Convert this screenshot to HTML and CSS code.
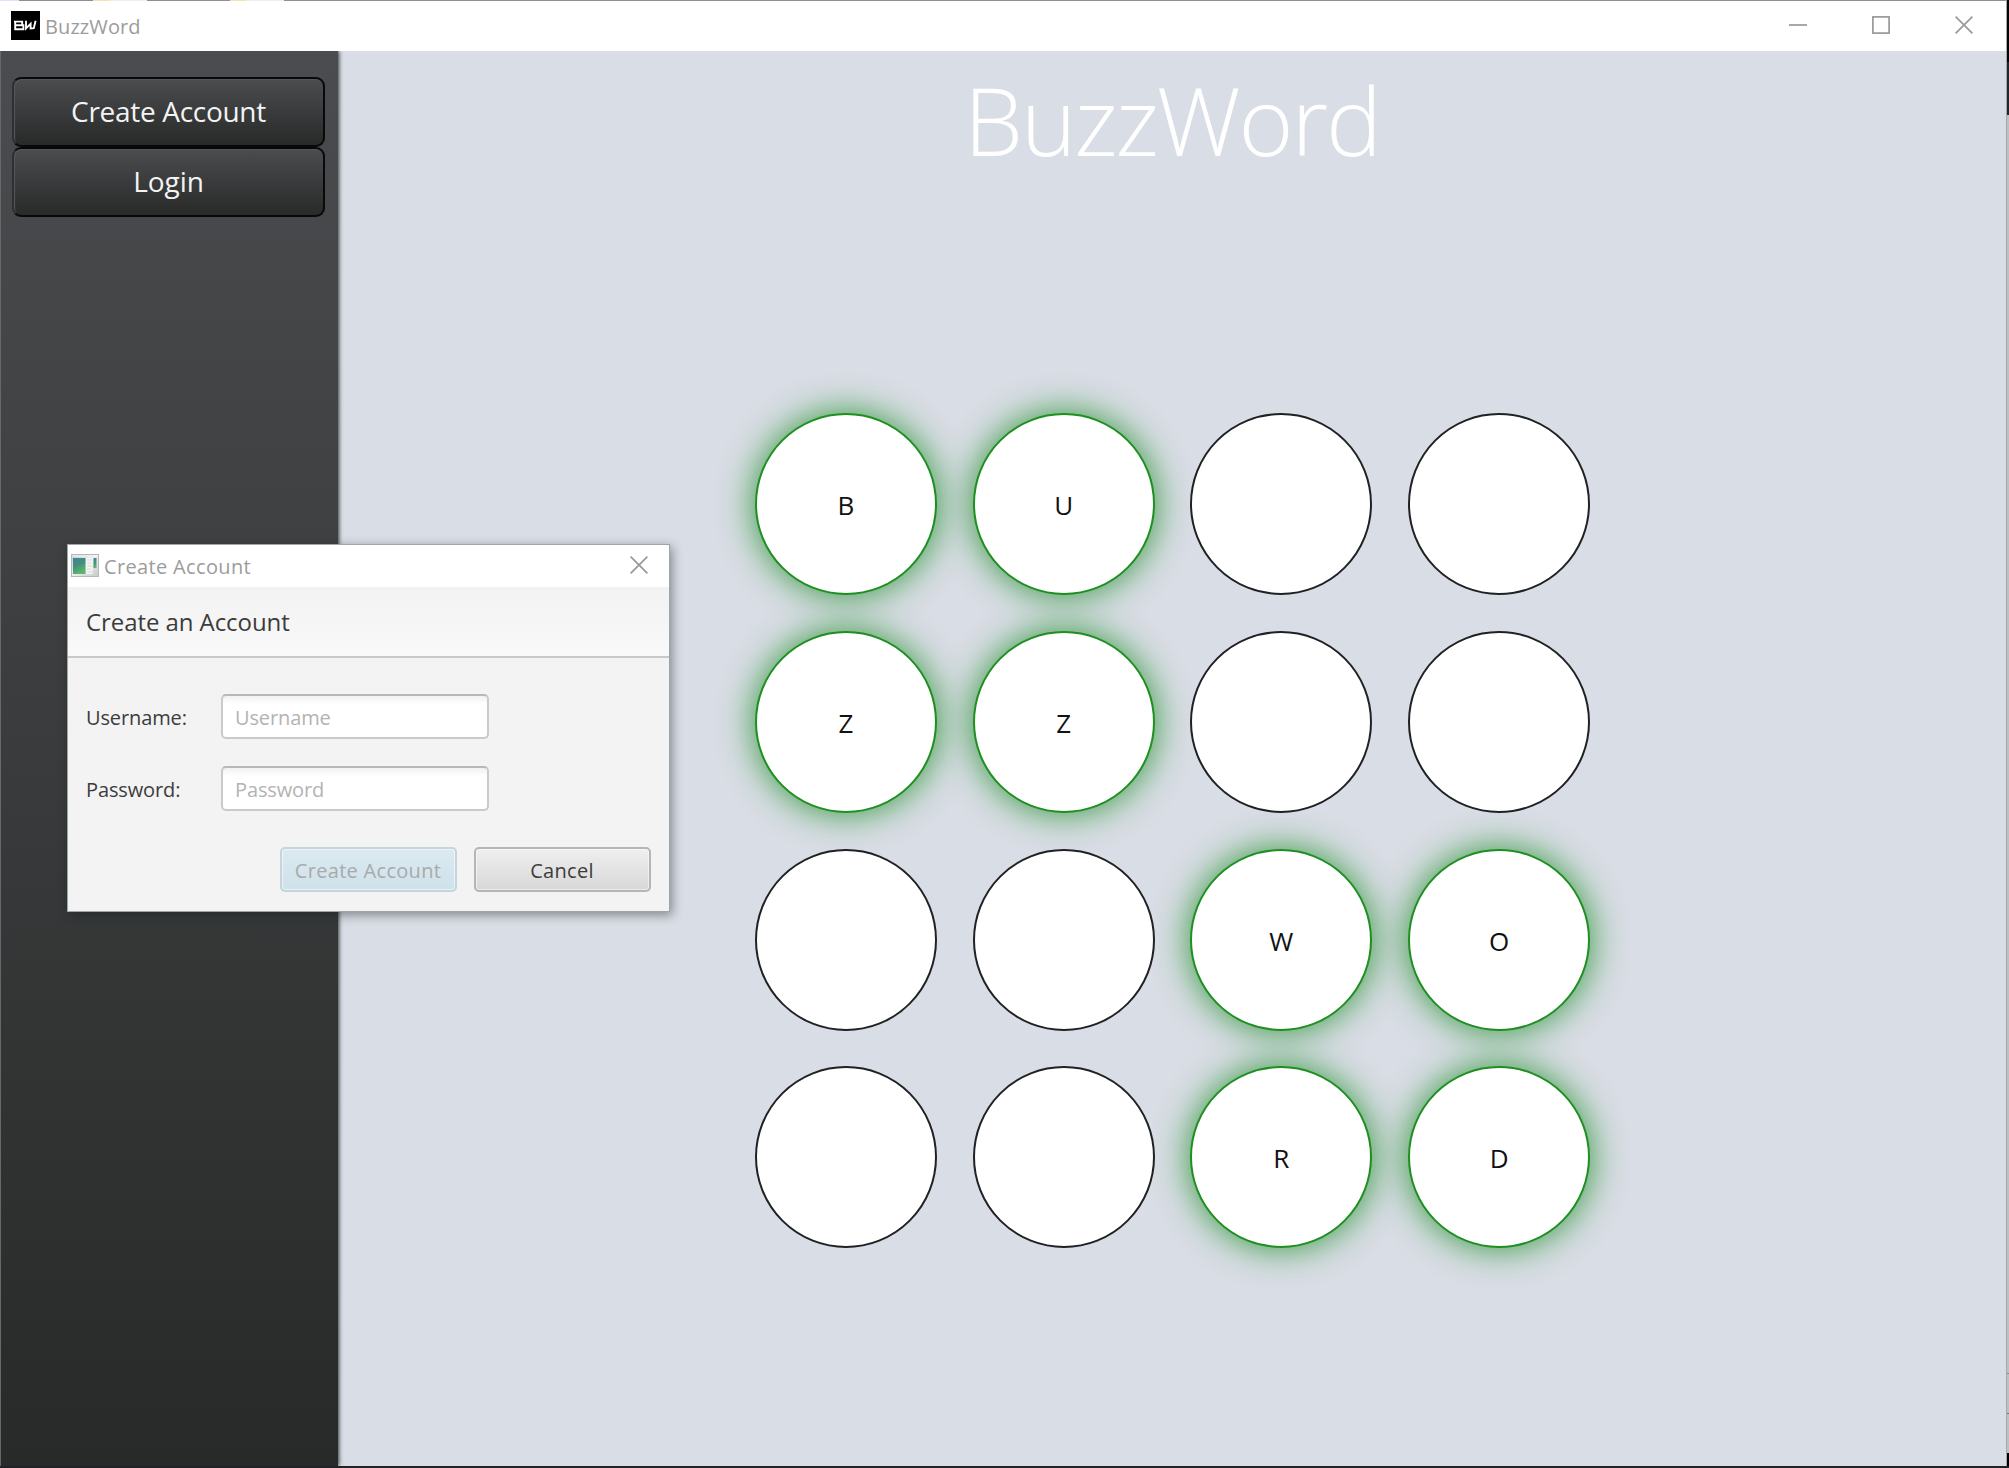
FILE: index.html
```html
<!DOCTYPE html>
<html lang="en">
<head>
<meta charset="utf-8">
<title>BuzzWord</title>
<link rel="stylesheet" href="styles.css">
</head>
<body>
<div class="desktop">
  <div class="window">
    <header class="titlebar">
      <svg class="app-icon" viewBox="0 0 29 29" width="29" height="29">
        <rect width="29" height="29" fill="#000"/>
        <g fill="none" stroke="#fff" stroke-width="1.9">
          <path d="M3 10.6H11.2V14.3H4.2M4.2 10.6V18.3H12.4V14.3H10"/>
          <path d="M15 9.8V17.4L19.6 12.8V17.4L22.8 17.2L24.6 9.8"/>
        </g>
      </svg>
      <span class="titlebar-text">BuzzWord</span>
      <div class="window-controls">
        <svg width="18" height="18" viewBox="0 0 18 18"><path d="M0 9H18"/></svg>
        <svg width="18" height="18" viewBox="0 0 18 18"><rect x=".9" y=".9" width="16.2" height="16.2"/></svg>
        <svg width="18" height="18" viewBox="0 0 18 18"><path d="M.6 .6L17.4 17.4M17.4 .6L.6 17.4"/></svg>
      </div>
    </header>
    <div class="content">
      <nav class="sidebar">
        <button class="nav-button nav-create"><span>Create Account</span></button>
        <button class="nav-button nav-login"><span>Login</span></button>
      </nav>
      <main class="game">
        <h1 class="heading">BuzzWord</h1>
        <div class="board">
          <div class="node lit">B</div><div class="node lit">U</div><div class="node"></div><div class="node"></div>
          <div class="node lit">Z</div><div class="node lit">Z</div><div class="node"></div><div class="node"></div>
          <div class="node"></div><div class="node"></div><div class="node lit">W</div><div class="node lit">O</div>
          <div class="node"></div><div class="node"></div><div class="node lit">R</div><div class="node lit">D</div>
        </div>
      </main>
    </div>
  </div>
  <aside class="edge"></aside>
</div>
<section class="dialog">
  <header class="dialog-titlebar">
    <svg class="dialog-icon" width="28" height="23" viewBox="0 0 28 23">
      <defs>
        <linearGradient id="scene" x1="0" y1="0" x2=".4" y2="1"><stop offset="0" stop-color="#477fa3"/><stop offset=".5" stop-color="#42907c"/><stop offset="1" stop-color="#5eb56c"/></linearGradient>
        <linearGradient id="frame" x1="0" y1="0" x2="1" y2="1"><stop offset="0" stop-color="#c4cacd"/><stop offset=".5" stop-color="#eceeee"/><stop offset="1" stop-color="#c6c9c9"/></linearGradient>
      </defs>
      <rect x=".5" y=".5" width="27" height="22" fill="url(#frame)" stroke="#b4babb"/>
      <path d="M1 2H27" stroke="#f5f7f8"/>
      <rect x="2" y="4" width="12.5" height="16" fill="url(#scene)"/>
      <rect x="15" y="4" width="6.5" height="16" fill="#f6f6f6"/>
      <path d="M16 6H21M16 9H20M16 12H21M16 15H20M16 18H21" stroke="#d5d7d7"/>
      <rect x="22.5" y="4" width="3" height="10" fill="url(#scene)"/>
    </svg>
    <span class="dialog-title">Create Account</span>
    <svg class="dialog-close" width="18" height="18" viewBox="0 0 18 18"><path d="M.6 .6L17.4 17.4M17.4 .6L.6 17.4"/></svg>
  </header>
  <div class="dialog-header"><span>Create an Account</span></div>
  <form class="dialog-form">
    <label class="field"><span class="label">Username:</span><span class="input">Username</span></label>
    <label class="field"><span class="label">Password:</span><span class="input">Password</span></label>
    <div class="actions">
      <button type="button" class="action action-create">Create Account</button>
      <button type="button" class="action action-cancel">Cancel</button>
    </div>
  </form>
</section>
</body>
</html>
```
FILE: styles.css
```css
* { box-sizing: border-box; }
body {
  margin: 0;
  width: 2009px;
  height: 1468px;
  overflow: hidden;
  font-family: "Open Sans", "Noto Sans", sans-serif;
}
button { font-family: inherit; margin: 0; padding: 0; }
.desktop { display: flex; height: 1468px; border-bottom: 2px solid #222126; background: #222126; }
.window { width: 2006px; display: flex; flex-direction: column; }
.edge {
  width: 3px;
  border-left: 1px solid #a6a9ac;
  background: linear-gradient(#050505 0 62px, #20262a 62px 115px, #bfc0c0 115px 1373px, #8b8c8c 1373px 1374px, #bfc0c0 1374px 1413px, #777 1413px 1414px, #bfc0c0 1414px 1453px, #000 1453px);
}
.titlebar {
  height: 51px;
  display: flex;
  align-items: center;
  padding: 0 33px 0 11px;
  background: linear-gradient(90deg, #dfe3f5 0 19px, #8f8f8f 19px 93px, #f5e2ac 93px 109px, #f2f0e6 109px 147px, #8f8f8f 147px 230px, #f5e2ac 230px 246px, #eeeeec 246px 284px, #8f8f8f 284px) top / 100% 1px no-repeat #fff;
}
.app-icon { margin-top: -1px; }
.titlebar-text { margin: 2px 0 0 5px; font-size: 20px; line-height: 28px; letter-spacing: .1px; color: #9c9c9c; }
.window-controls { margin: -1px 0 0 auto; display: flex; gap: 65px; }
.window-controls svg, .dialog-close { fill: none; stroke: #999; stroke-width: 1.7; }
.content { flex: 1; display: flex; }
.sidebar {
  position: relative;
  z-index: 1;
  width: 338px;
  padding: 26px 0 0 11px;
  border-left: 1px solid #666869;
  background: linear-gradient(#4b4c4f, #282a29);
  box-shadow: 1px 0 4px rgba(0, 15, 15, .8);
  clip-path: inset(0 -12px 0 0);
}
.nav-button {
  display: flex;
  align-items: center;
  justify-content: center;
  width: 313px;
  height: 70px;
  padding-bottom: 2px;
  border: 2px solid #080909;
  border-left-color: #2e2f31;
  border-radius: 9px;
  background: linear-gradient(#4b4c4f, #282a29);
  box-shadow: inset 1px 1px 1px #57585a;
  color: #f3f3f3;
  font-size: 28px;
}
.nav-create { letter-spacing: -.3px; }
.nav-login { letter-spacing: -.1px; }
.game { flex: 1; display: flex; flex-direction: column; align-items: center; background: #d9dde5; }
.heading {
  margin: 4px 0 0;
  height: 130px;
  line-height: 130px;
  font-size: 94px;
  font-weight: 300;
  letter-spacing: -2.1px;
  color: #fff;
}
.board { display: grid; grid-template-columns: repeat(4, 182px); grid-auto-rows: 182px; gap: 35.75px; margin: 228px 0 0 1px; }
.node {
  display: flex;
  align-items: center;
  justify-content: center;
  padding-top: 2px;
  border: 2px solid #202124;
  border-radius: 50%;
  background: #fff;
  font-size: 26px;
  line-height: 36px;
  color: #111;
}
.lit { border-color: #1f8f22; box-shadow: 0 0 34px 1px rgba(20, 140, 30, .82); }
.dialog {
  position: absolute;
  z-index: 2;
  left: 67px;
  top: 544px;
  width: 603px;
  height: 368px;
  border: 1px solid #a0a4a8;
  background: #f3f3f3;
  box-shadow: 2px 3px 10px rgba(20, 30, 30, .45);
  color: #3c3c3c;
}
.dialog-titlebar { height: 42px; display: flex; align-items: center; padding: 0 21px 0 3px; background: #fff; }
.dialog-icon { margin-top: -2px; }
.dialog-title { margin: 2px 0 0 5px; font-size: 20px; line-height: 28px; letter-spacing: .35px; color: #9c9c9c; }
.dialog-close { margin-left: auto; margin-top: -2px; }
.dialog-header {
  height: 71px;
  display: flex;
  align-items: center;
  padding-left: 18px;
  border-bottom: 2px solid #c8c8c8;
  background: linear-gradient(#f2f2f2, #f9f9f9);
  font-size: 24px;
  letter-spacing: -.07px;
}
.dialog-form { padding: 36px 18px 0; font-size: 20px; letter-spacing: -.12px; }
.field { display: flex; height: 45px; align-items: center; margin-bottom: 27px; }
.label { width: 135px; padding-top: 2px; }
.input {
  width: 268px;
  height: 45px;
  padding-left: 12px;
  border: 2px solid #cacaca;
  border-top-color: #b8b8b8;
  border-radius: 5px;
  background: linear-gradient(#f1f1f1, #fff 8px);
  line-height: 44px;
  color: #b3b3b3;
}
.actions { display: flex; justify-content: flex-end; gap: 17px; margin-top: 36px; }
.action {
  width: 177px;
  height: 45px;
  padding: 1px 1px 0 0;
  border: 2px solid #b5b5b5;
  border-radius: 5px;
  background: linear-gradient(#efefef, #d8d8d8);
  box-shadow: inset 0 0 0 1px rgba(255, 255, 255, .5);
  font-size: 20px;
  letter-spacing: .3px;
  color: #3c3c3c;
  white-space: nowrap;
}
.action-create { border-color: #c4d5dc; background: linear-gradient(#dbeaf1, #cfe1e9); color: #a8aaab; }
```
